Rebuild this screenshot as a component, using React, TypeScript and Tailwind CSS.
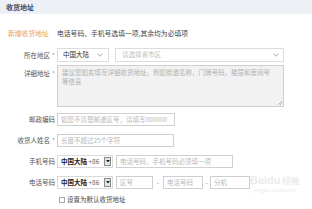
import React from 'react';

const font = { fontFamily: '"Noto Sans CJK SC", "Noto Sans", sans-serif' };

const Label = ({ text, required }: { text: string; required?: boolean }) => (
  <div className="w-[57px] shrink-0 pr-[2px] text-right text-[6.5px] leading-[13px] text-[#555]">
    {text}
    {required && <span className="ml-[2px] text-[#999]">*</span>}
  </div>
);

const Chevron = () => (
  <svg width="6" height="4" viewBox="0 0 6 4" className="shrink-0">
    <path d="M0.5 0.8 L3 3.2 L5.5 0.8" fill="none" stroke="#999" strokeWidth="0.8" />
  </svg>
);

const Field = ({ w, text }: { w: string; text: string }) => (
  <div className={`${w} flex h-[13px] items-center overflow-hidden whitespace-nowrap border border-[#cfcfcf] bg-white pl-[3px] text-[6.5px] text-[#b8b8b8]`}>
    {text}
  </div>
);

const PhoneSelect = () => (
  <div className="flex h-[13px] w-[56px] items-center justify-between border border-[#dadada] bg-white pl-[3px] pr-[1px]">
    <span className="whitespace-nowrap text-[6.5px] font-semibold text-[#222]">
      中国大陆 <span className="font-normal text-[#666]">+86</span>
    </span>
    <div className="flex h-[9px] w-[7px] items-center justify-center border border-[#8a8a8a] bg-[#e6e6e6]">
      <svg width="4" height="3" viewBox="0 0 4 3">
        <path d="M0 0 H4 L2 2.5 Z" fill="#222" />
      </svg>
    </div>
  </div>
);

const Dash = () => <span className="w-[7px] text-center text-[6px] text-[#777]">-</span>;

export default function App() {
  return (
    <div className="relative h-[209px] w-[312px] overflow-hidden bg-white" style={font}>
      <div className="flex h-[14px] items-center bg-[#edf1f6] pl-[6px] text-[7px] font-bold text-[#3b4a5c]">
        收货地址
      </div>

      <div className="mt-[13px] flex h-[12px] items-center text-[6.8px]">
        <span className="w-[57px] pl-[8px] text-[#e8a34a]">新增收货地址</span>
        <span className="text-[#444]">电话号码、手机号选填一项,其余均为必填项</span>
      </div>

      <div className="mt-[9px] flex items-center">
        <Label text="所在地区" required />
        <div className="flex h-[14px] w-[52px] items-center justify-between border border-[#dcdcdc] bg-white px-[5px] text-[6.5px] text-[#333]">
          中国大陆
          <Chevron />
        </div>
        <div className="ml-[6px] flex h-[14px] w-[169px] items-center justify-between border border-[#dcdcdc] bg-white pl-[6px] pr-[4px] text-[6.5px] text-[#c0c0c0]">
          请选择省市区
          <Chevron />
        </div>
      </div>

      <div className="mt-[3px] flex items-start">
        <div className="pt-[2px]">
          <Label text="详细地址" required />
        </div>
        <div className="relative h-[42px] w-[227px] whitespace-nowrap border border-[#cfcfcf] bg-[#f2f2f2] pl-[4px] pt-[2px] text-[6.5px] leading-[9px] text-[#b0b0b0]">
          <div>建议您如实填写详细收货地址，例如街道名称，门牌号码，楼层和房间号</div>
          <div>等信息</div>
          <svg width="5" height="5" viewBox="0 0 5 5" className="absolute bottom-[1px] right-[1px]">
            <path d="M1 5 L5 1 M3 5 L5 3" stroke="#999" strokeWidth="0.7" />
          </svg>
        </div>
      </div>

      <div className="mt-[6px] flex items-center">
        <Label text="邮政编码" />
        <Field w="w-[118px]" text="如您不清楚邮递区号，请填写000000" />
      </div>

      <div className="mt-[8px] flex items-center">
        <Label text="收货人姓名" required />
        <Field w="w-[117px]" text="长度不超过25个字符" />
      </div>

      <div className="mt-[8px] flex items-center">
        <Label text="手机号码" />
        <PhoneSelect />
        <div className="ml-[3px]">
          <Field w="w-[117px]" text="电话号码，手机号码必须填一项" />
        </div>
      </div>

      <div className="mt-[8px] flex items-center">
        <Label text="电话号码" />
        <PhoneSelect />
        <div className="ml-[3px] flex items-center">
          <Field w="w-[37px]" text="区号" />
          <span className="w-[10px] text-center text-[6px] text-[#777]">-</span>
          <Field w="w-[40px]" text="电话号码" />
          <Dash />
          <Field w="w-[40px]" text="分机" />
        </div>
      </div>

      <div className="mt-[6px] flex items-center pl-[59px]">
        <div className="h-[6px] w-[6px] border border-[#aaa] bg-white" />
        <span className="ml-[2px] text-[6.5px] text-[#444]">设置为默认收货地址</span>
      </div>

      <div className="pointer-events-none absolute left-[250px] top-[174px] flex flex-col items-center text-[#ececec]">
        <span className="text-[11px] font-bold leading-[12px]" style={{ fontFamily: '"Liberation Sans", sans-serif' }}>
          Baidu<span className="ml-[1px] text-[9px]">经验</span>
        </span>
        <span className="text-[5px] leading-[6px]">jingyan.baidu.com</span>
      </div>
    </div>
  );
}
